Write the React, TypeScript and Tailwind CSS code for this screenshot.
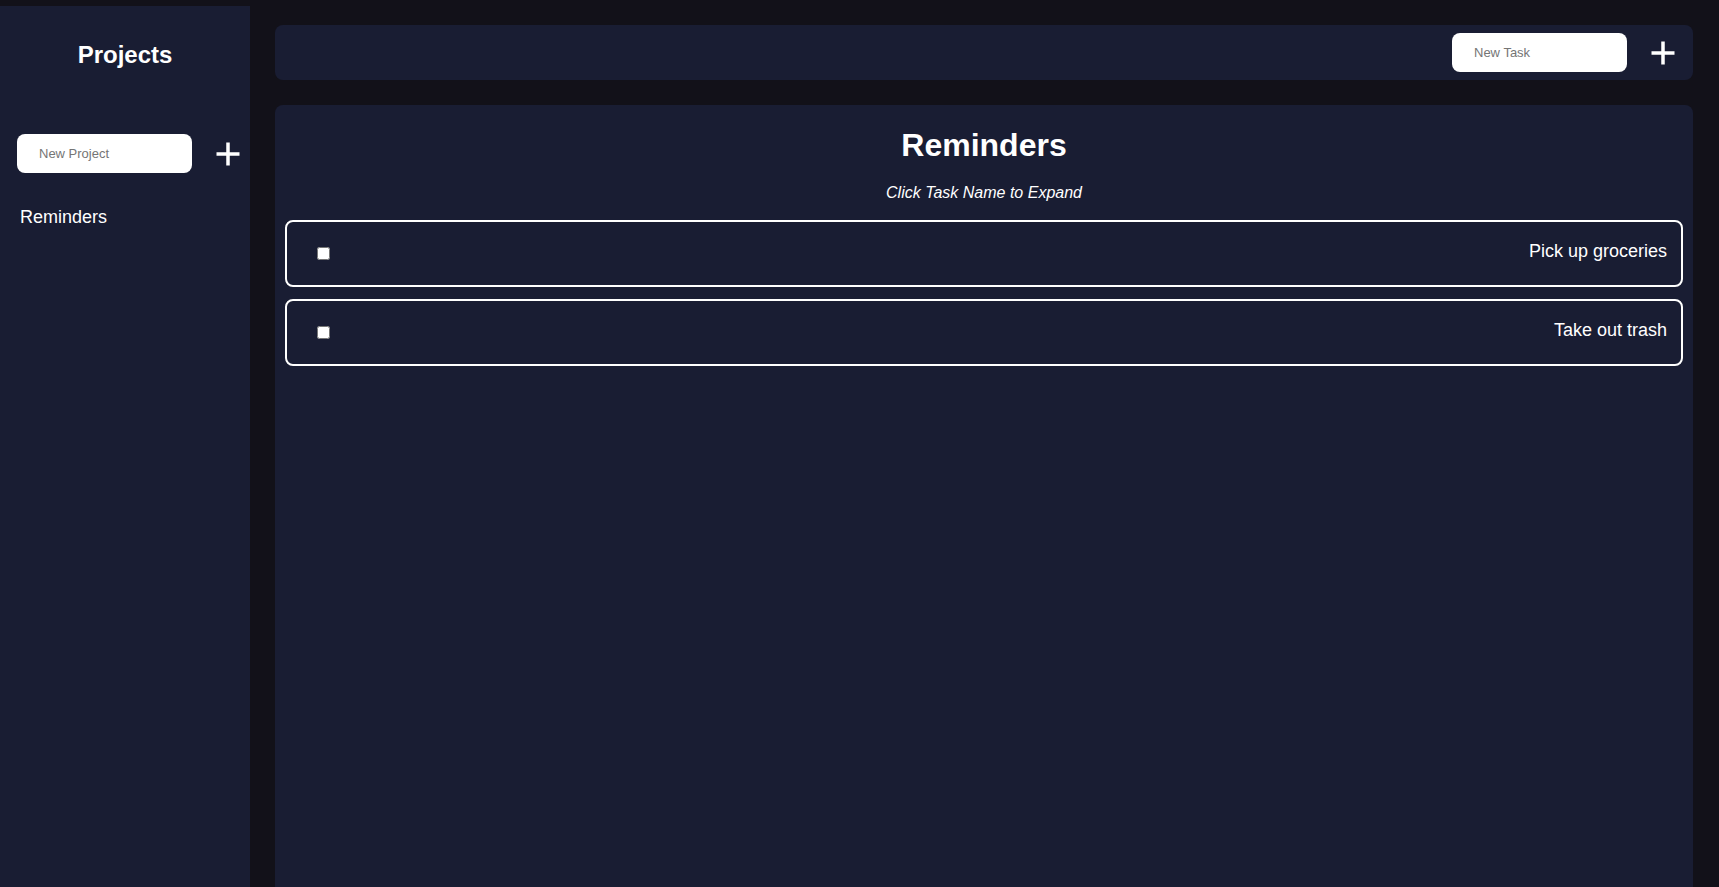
import { useState } from "react";

type Task = {
  id: number;
  name: string;
  done: boolean;
};

const initialTasks: Task[] = [
  { id: 1, name: "Pick up groceries", done: false },
  { id: 2, name: "Take out trash", done: false },
];

function PlusButton() {
  return (
    <button className="flex h-6 w-6 items-center justify-center text-white">
      <svg width="24" height="24" viewBox="0 0 24 24" fill="none">
        <path d="M12 0.5v23M0.5 12h23" stroke="currentColor" strokeWidth="3.5" />
      </svg>
    </button>
  );
}

export default function App() {
  const [tasks, setTasks] = useState<Task[]>(initialTasks);

  const toggle = (id: number) =>
    setTasks((prev) =>
      prev.map((t) => (t.id === id ? { ...t, done: !t.done } : t))
    );

  return (
    <div className="flex h-screen overflow-hidden bg-[#121119] font-['Liberation_Sans',Arial,sans-serif] text-white">
      {/* sidebar */}
      <aside className="mt-[6px] flex w-[250px] shrink-0 flex-col bg-[#191d33] pt-[33px]">
        <h2 className="text-center text-2xl font-bold leading-8">Projects</h2>
        <div className="mt-[63px] flex items-center gap-6 pl-[17px]">
          <input
            placeholder="New Project"
            className="h-[39px] w-[175px] rounded-lg bg-white px-[22px] text-[13px] text-black outline-none placeholder:text-[#757575]"
          />
          <PlusButton />
        </div>
        <ul className="mt-[30px] pl-5">
          <li className="text-lg leading-7">Reminders</li>
        </ul>
      </aside>

      {/* main column */}
      <main className="flex flex-1 flex-col gap-[25px] pl-[25px] pr-[26px] pt-[25px]">
        <div className="flex h-[55px] shrink-0 items-center justify-end gap-6 rounded-lg bg-[#191d33] pr-[18px]">
          <input
            placeholder="New Task"
            className="h-[39px] w-[175px] rounded-lg bg-white px-[22px] text-[13px] text-black outline-none placeholder:text-[#757575]"
          />
          <PlusButton />
        </div>

        <section className="flex-1 rounded-t-lg bg-[#191d33] px-[10px] pt-[20px]">
          <h1 className="text-center text-[32px] font-bold leading-10">
            Reminders
          </h1>
          <p className="mt-4 text-center text-base italic leading-6">
            Click Task Name to Expand
          </p>
          <div className="mt-[15px] flex flex-col gap-3">
            {tasks.map((task) => (
              <div
                key={task.id}
                className="flex h-[67px] items-center justify-between rounded-lg border-2 border-white pl-[30px] pr-[14px]"
              >
                <input
                  type="checkbox"
                  checked={task.done}
                  onChange={() => toggle(task.id)}
                />
                <span className="mb-[5px] cursor-pointer text-lg leading-7">
                  {task.name}
                </span>
              </div>
            ))}
          </div>
        </section>
      </main>
    </div>
  );
}
